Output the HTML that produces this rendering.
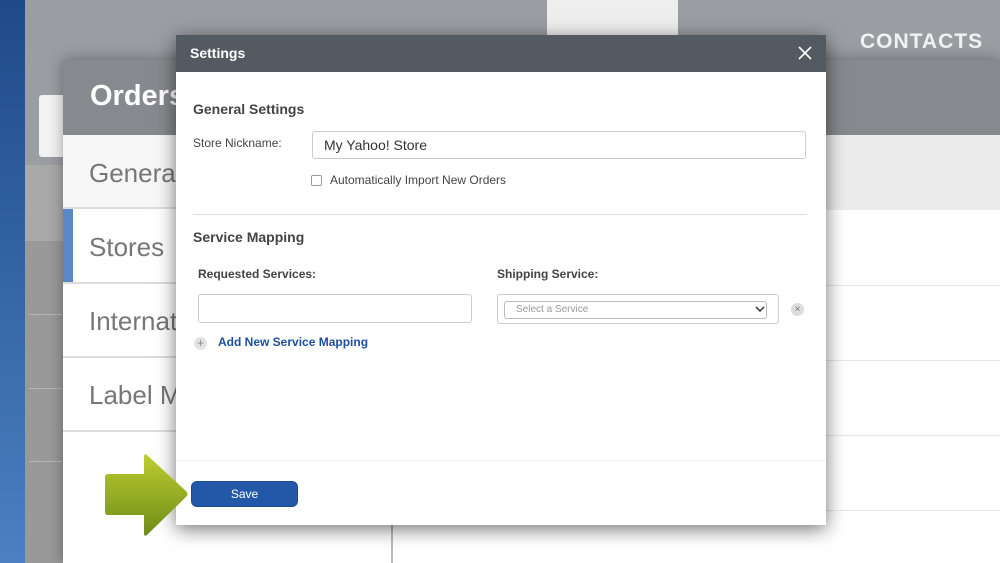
<!DOCTYPE html>
<html><head><style>
*{margin:0;padding:0;box-sizing:border-box}
body{width:1000px;height:563px;overflow:hidden;position:relative;font-family:"Liberation Sans",sans-serif;background:#9a9da2}
.a{position:absolute}
</style></head><body>
<div class="a" style="left:0;top:0;width:25px;height:563px;background:linear-gradient(#1f4a8a,#4b80c2)"></div>
<div class="a" style="left:547px;top:0;width:131px;height:36px;background:#eeeeee"></div>
<div class="a" style="left:860px;top:30px;color:#f2f2f2;font-weight:bold;font-size:21px;letter-spacing:1px">CONTACTS</div>
<div class="a" style="left:25px;top:165px;width:38px;height:76px;background:#a9a9a9"></div>
<div class="a" style="left:25px;top:241px;width:38px;height:322px;background:#999;"></div>
<div class="a" style="left:29px;top:314px;width:34px;height:1px;background:#b5b5b5"></div>
<div class="a" style="left:29px;top:388px;width:34px;height:1px;background:#b5b5b5"></div>
<div class="a" style="left:29px;top:461px;width:34px;height:1px;background:#b5b5b5"></div>
<div class="a" style="left:39px;top:95px;width:30px;height:62px;background:#f3f3f3;border-radius:3px"></div>
<div class="a" style="left:63px;top:60px;width:937px;height:503px;background:#fff;box-shadow:0 0 14px rgba(0,0,0,.35)"></div>
<div class="a" style="left:63px;top:60px;width:937px;height:75px;background:#86898d"></div>
<div class="a" style="left:90px;top:80px;color:#fff;font-weight:bold;font-size:29px">Orders</div>
<div class="a" style="left:390px;top:135px;width:610px;height:75px;background:#ececec"></div>
<div class="a" style="left:390px;top:285px;width:610px;height:1px;background:#e8e8e8"></div>
<div class="a" style="left:390px;top:360px;width:610px;height:1px;background:#e8e8e8"></div>
<div class="a" style="left:390px;top:435px;width:610px;height:1px;background:#e8e8e8"></div>
<div class="a" style="left:390px;top:510px;width:610px;height:1px;background:#e8e8e8"></div>
<div class="a" style="left:391px;top:520px;width:2px;height:43px;background:#bbb"></div>
<div class="a" style="left:63px;top:135px;width:327px;height:74px;background:#f7f7f7;border-bottom:2px solid #ddd"></div>
<div class="a" style="left:63px;top:209px;width:10px;height:74px;background:#5b87c6"></div>
<div class="a" style="left:63px;top:282px;width:327px;height:2px;background:#ddd"></div>
<div class="a" style="left:63px;top:356px;width:327px;height:2px;background:#ddd"></div>
<div class="a" style="left:63px;top:430px;width:327px;height:2px;background:#ddd"></div>
<div class="a" style="left:89px;top:158px;color:#777;font-size:26px">General</div>
<div class="a" style="left:89px;top:232px;color:#777;font-size:26px">Stores</div>
<div class="a" style="left:89px;top:306px;color:#777;font-size:26px">Internat</div>
<div class="a" style="left:89px;top:380px;color:#777;font-size:26px">Label M</div>

<div class="a" style="left:176px;top:35px;width:650px;height:490px;background:#fff;box-shadow:0 4px 18px rgba(0,0,0,.55)">
 <div class="a" style="left:0;top:0;width:650px;height:37px;background:#535a62"></div>
 <div class="a" style="left:14px;top:10px;color:#fff;font-weight:bold;font-size:14px">Settings</div>
 <svg class="a" style="left:622px;top:11px" width="14" height="14"><path d="M1 1L13 13M13 1L1 13" stroke="#fff" stroke-width="1.6"/></svg>
 <div class="a" style="left:17px;top:66px;color:#444;font-weight:bold;font-size:14px">General Settings</div>
 <div class="a" style="left:17px;top:101px;color:#444;font-size:12px">Store Nickname:</div>
 <div class="a" style="left:136px;top:96px;width:494px;height:28px;border:1px solid #ccc;border-radius:3px;padding:5px 11px;font-size:14px;color:#333">My Yahoo! Store</div>
 <div class="a" style="left:135px;top:140px;width:11px;height:11px;border:1px solid #999;border-radius:2px"></div>
 <div class="a" style="left:154px;top:138px;color:#444;font-size:12px">Automatically Import New Orders</div>
 <div class="a" style="left:17px;top:179px;width:614px;height:1px;background:#ddd"></div>
 <div class="a" style="left:17px;top:194px;color:#444;font-weight:bold;font-size:14px">Service Mapping</div>
 <div class="a" style="left:22px;top:232px;color:#444;font-weight:bold;font-size:12px">Requested Services:</div>
 <div class="a" style="left:321px;top:232px;color:#444;font-weight:bold;font-size:12px">Shipping Service:</div>
 <div class="a" style="left:22px;top:259px;width:274px;height:29px;border:1px solid #ccc;border-radius:3px"></div>
 <div class="a" style="left:321px;top:259px;width:282px;height:30px;border:1px solid #ccc;border-radius:3px"></div>
 <div class="a" style="left:328px;top:266px;width:263px;height:18px;border:1px solid #bbb;border-radius:3px;font-size:10px;color:#999;padding:2px 11px">Select a Service</div>
 <svg class="a" style="left:579px;top:270px" width="10" height="8"><path d="M1 2L5 6L9 2" stroke="#444" stroke-width="1.6" fill="none"/></svg>
 <div class="a" style="left:615px;top:268px;width:13px;height:13px;border-radius:50%;background:#ddd;color:#777;font-size:10px;line-height:13px;text-align:center">×</div>
 <div class="a" style="left:18px;top:302px;width:13px;height:13px;border-radius:50%;background:#e3e3e3;color:#888;font-size:12px;line-height:13px;text-align:center">+</div>
 <div class="a" style="left:42px;top:300px;color:#1c4f9e;font-weight:bold;font-size:12px">Add New Service Mapping</div>
 <div class="a" style="left:0;top:425px;width:650px;height:1px;background:#eee"></div>
 <div class="a" style="left:15px;top:446px;width:107px;height:26px;background:#2358a8;border:1px solid #1a4a90;border-radius:6px;color:#fff;font-size:12px;text-align:center;line-height:24px">Save</div>
</div>
<svg class="a" style="left:103px;top:451px" width="90" height="90"><defs><linearGradient id="g" x1="0" y1="0" x2="0" y2="1"><stop offset="0" stop-color="#bccd2f"/><stop offset="1" stop-color="#6f8c18"/></linearGradient></defs><path d="M5 23H41V6Q41 1 45 5L83 40Q86 43 83 46L45 83Q41 87 41 82V64H5Q2 64 2 61V26Q2 23 5 23Z" fill="url(#g)"/></svg>
</body></html>
